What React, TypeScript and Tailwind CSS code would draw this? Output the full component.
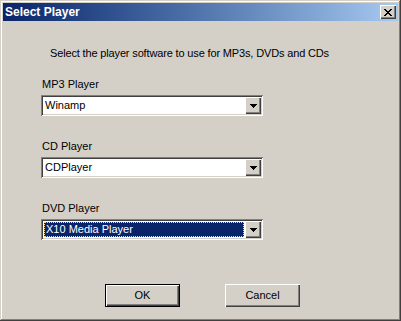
import React from "react";

const font = { fontFamily: '"Liberation Sans", Arial, sans-serif' };

function Combo({ value, selected }: { value: string; selected?: boolean }) {
  return (
    <div className="w-[222px] h-[21px] p-[2px] bg-white shadow-[inset_1px_1px_#808080,inset_-1px_-1px_#ffffff,inset_2px_2px_#404040,inset_-2px_-2px_#d4d0c8] flex">
      <div className="flex-1 bg-white flex items-center p-[1px]">
        {selected ? (
          <div className="w-full h-full bg-[#0a246a] border border-dotted border-[#f5db95] flex items-center pl-[1px] text-white text-[11px] leading-[13px]">
            {value}
          </div>
        ) : (
          <div className="pl-[1px] text-black text-[11px] leading-[13px]">{value}</div>
        )}
      </div>
      <div className="w-[16px] h-[17px] bg-[#d4d0c8] shadow-[inset_1px_1px_#ffffff,inset_-1px_-1px_#404040,inset_-2px_-2px_#808080] flex items-center justify-center">
        <svg width="7" height="4" viewBox="0 0 7 4" shapeRendering="crispEdges">
          <path d="M0 0h7v1H0zM1 1h5v1H1zM2 2h3v1H2zM3 3h1v1H3z" fill="#000" />
        </svg>
      </div>
    </div>
  );
}

export default function App() {
  return (
    <div
      className="w-[401px] h-[321px] bg-[#d4d0c8] p-[3px] flex flex-col shadow-[inset_-1px_-1px_#404040,inset_1px_1px_#d4d0c8,inset_-2px_-2px_#808080,inset_2px_2px_#ffffff] text-black"
      style={font}
    >
      <div className="h-[18px] bg-gradient-to-r from-[#0a246a] to-[#a6caf0] flex items-center pl-[2px] pr-[2px]">
        <span className="text-white font-bold text-[12px] leading-[14px] flex-1">Select Player</span>
        <div className="w-[16px] h-[14px] bg-[#d4d0c8] shadow-[inset_1px_1px_#ffffff,inset_-1px_-1px_#404040,inset_-2px_-2px_#808080] flex items-center justify-center">
          <svg width="8" height="7" viewBox="0 0 8 7" shapeRendering="crispEdges">
            <path
              d="M0 0h2v1H0zM6 0h2v1H6zM1 1h2v1H1zM5 1h2v1H5zM2 2h4v1H2zM3 3h2v1H3zM2 4h4v1H2zM1 5h2v1H1zM5 5h2v1H5zM0 6h2v1H0zM6 6h2v1H6z"
              fill="#000"
            />
          </svg>
        </div>
      </div>

      <div className="pl-[38px] flex flex-col">
        <div className="mt-[26px] pl-[9px] text-[11px] leading-[13px] tracking-[-0.15px]">
          Select the player software to use for MP3s, DVDs and CDs
        </div>

        <div className="mt-[18px] pl-[1px] text-[11px] leading-[13px]">MP3 Player</div>
        <div className="mt-[4px]">
          <Combo value="Winamp" />
        </div>

        <div className="mt-[24px] pl-[1px] text-[11px] leading-[13px]">CD Player</div>
        <div className="mt-[4px]">
          <Combo value="CDPlayer" />
        </div>

        <div className="mt-[24px] pl-[1px] text-[11px] leading-[13px]">DVD Player</div>
        <div className="mt-[4px]">
          <Combo value="X10 Media Player" selected />
        </div>
      </div>

      <div className="mt-[44px] pl-[102px] flex gap-[45px]">
        <button className="w-[75px] h-[23px] bg-[#d4d0c8] shadow-[inset_0_0_0_1px_#000000,inset_2px_2px_#ffffff,inset_-2px_-2px_#404040,inset_-3px_-3px_#808080] text-[11px] leading-[13px] flex items-center justify-center">
          OK
        </button>
        <button className="w-[75px] h-[23px] bg-[#d4d0c8] shadow-[inset_1px_1px_#ffffff,inset_-1px_-1px_#404040,inset_-2px_-2px_#808080] text-[11px] leading-[13px] flex items-center justify-center">
          Cancel
        </button>
      </div>
    </div>
  );
}
